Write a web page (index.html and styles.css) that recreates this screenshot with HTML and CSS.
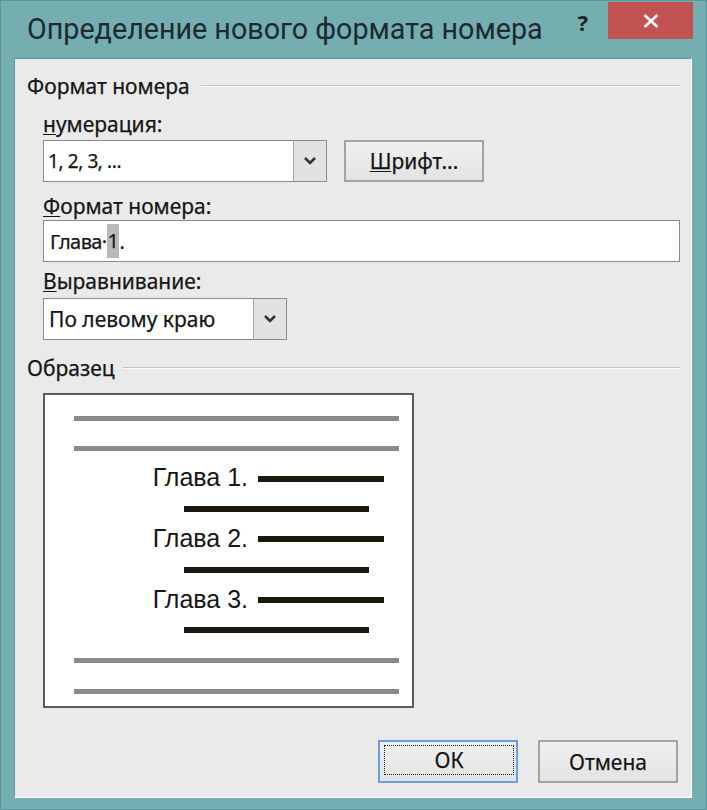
FILE: index.html
```html
<!DOCTYPE html>
<html lang="ru">
<head>
<meta charset="utf-8">
<title>Определение нового формата номера</title>
<link rel="stylesheet" href="styles.css">
</head>
<body>
<div class="window">
  <div class="titlebar">
    <div class="title">Определение нового формата номера</div>
    <div class="help">?</div>
    <div class="close">
      <svg width="16" height="14" viewBox="0 0 16 14"><path d="M1.5 1 L14.5 13 M14.5 1 L1.5 13" stroke="#fff" stroke-width="2.6" fill="none"/></svg>
    </div>
  </div>
  <div class="client">
    <div class="group-head"><span>Формат номера</span><i class="rule"></i></div>
    <div class="group-body">
      <div class="label l1"><u>н</u>умерация:</div>
      <div class="row">
        <div class="combo combo-num">
          <span class="val">1, 2, 3, ...</span>
          <span class="drop"><svg width="12" height="8" viewBox="0 0 12 8"><polyline points="1,1 6,6 11,1" fill="none" stroke="#333" stroke-width="2.6"/></svg></span>
        </div>
        <div class="btn btn-font"><u>Ш</u>рифт...</div>
      </div>
      <div class="label l2"><u>Ф</u>ормат номера:</div>
      <div class="input">Глава·<span class="sel">1</span>.</div>
      <div class="label l3"><u>В</u>ыравнивание:</div>
      <div class="combo combo-align">
        <span class="val">По левому краю</span>
        <span class="drop"><svg width="12" height="8" viewBox="0 0 12 8"><polyline points="1,1 6,6 11,1" fill="none" stroke="#333" stroke-width="2.6"/></svg></span>
      </div>
    </div>
    <div class="group-head g2"><span>Образец</span><i class="rule"></i></div>
    <div class="preview">
      <div class="prow"><i class="gbar"></i></div>
      <div class="prow"><i class="gbar"></i></div>
      <div class="prow"><span class="num">Глава 1.</span><i class="bbar first"></i></div>
      <div class="prow"><i class="bbar cont"></i></div>
      <div class="prow"><span class="num">Глава 2.</span><i class="bbar first"></i></div>
      <div class="prow"><i class="bbar cont"></i></div>
      <div class="prow"><span class="num">Глава 3.</span><i class="bbar first"></i></div>
      <div class="prow"><i class="bbar cont"></i></div>
      <div class="prow"><i class="gbar"></i></div>
      <div class="prow"><i class="gbar"></i></div>
    </div>
    <div class="actions">
      <div class="btn btn-ok"><span class="focus">ОК</span></div>
      <div class="btn btn-cancel">Отмена</div>
    </div>
  </div>
</div>
</body>
</html>
```
FILE: styles.css
```css
* { box-sizing: border-box; }
html, body { margin: 0; padding: 0; }
body { background: #72adb0; }

.window {
  width: 707px;
  height: 810px;
  background: #74aeb1;
  border: 1px solid #5c979b;
  font-family: "Segoe UI", "Noto Sans", sans-serif;
  color: #141414;
  overflow: hidden;
}

.titlebar {
  height: 57px;
  display: flex;
  align-items: flex-start;
}
.title {
  flex: 1;
  margin: 11px 0 0 26px;
  font-family: "Segoe UI", Roboto, sans-serif;
  font-size: 28.7px;
  line-height: 34px;
  color: #1d2a2f;
  white-space: nowrap;
}
.help {
  margin: 9px 20px 0 0;
  font-family: "Noto Sans", sans-serif;
  font-weight: bold;
  font-size: 22px;
  line-height: 24px;
  color: #222;
}
.close {
  width: 85px;
  height: 37px;
  margin: 1px 13px 0 0;
  background: #c25251;
  display: flex;
  align-items: center;
  justify-content: center;
}

.client {
  margin-left: 13px;
  width: 678px;
  height: 740px;
  background: #eaeaea;
  border-top: 1px solid #5f9a9e;
  border-left: 1px solid #5f9a9e;
  border-right: 1px solid #fbfbfb;
  border-bottom: 1px solid #fbfbfb;
  padding: 0 11px 0 12px;
  font-size: 21px;
  color: #151515;
  -webkit-text-stroke: 0.25px #151515;
}

.group-head {
  margin-top: 15px;
  height: 24px;
  line-height: 22px;
  display: flex;
  align-items: center;
  white-space: nowrap;
}
.group-head.g2 { margin-top: 16px; }
.rule {
  flex: 1;
  margin-left: 11px;
  height: 2px;
  border-top: 1px solid #c6c6c6;
  border-bottom: 1px solid #fafafa;
  margin-top: -1px;
}
.g2 .rule { margin-left: 8px; }

.group-body { padding-left: 16px; }

.label {
  height: 24px;
  line-height: 22px;
  white-space: nowrap;
}
.l1 { margin-top: 15px; }
.l2 { margin-top: 13px; }
.l3 { margin-top: 8px; }
u { text-decoration-thickness: 1px; text-underline-offset: 2px; }

.row {
  display: flex;
  gap: 17px;
  margin-top: 3px;
}

.combo {
  height: 42px;
  display: flex;
  background: #fff;
  border: 1px solid #8a8a8a;
}
.combo-num { width: 284px; }
.combo-num .val { font-size: 19px; letter-spacing: -0.4px; }
.combo-align { width: 244px; margin-top: 4px; }
.combo .val {
  flex: 1;
  padding-left: 4px;
  display: flex;
  align-items: center;
  white-space: nowrap;
}
.combo-align .val { padding-left: 5px; }
.drop {
  width: 33px;
  background: #e2e2e2;
  border-left: 1px solid #a9a9a9;
  display: flex;
  align-items: center;
  justify-content: center;
}

.btn {
  width: 140px;
  height: 42px;
  border: 2px solid #a3a3a3;
  background: linear-gradient(#f0f0f0, #e3e3e3);
  display: flex;
  align-items: center;
  justify-content: center;
  white-space: nowrap;
}

.input {
  margin-top: 1px;
  height: 42px;
  width: 637px;
  background: #fff;
  border: 1px solid #8a8a8a;
  padding-left: 6px;
  display: flex;
  align-items: center;
  white-space: pre;
  font-size: 20px;
  letter-spacing: -0.6px;
}
.sel {
  background: #b9b9b9;
  padding: 3px 1px 4px;
}

.preview {
  margin: 13px 0 0 16px;
  width: 371px;
  height: 315px;
  background: #fff;
  border: 2px solid #5c5c5c;
  padding-top: 8px;
  display: grid;
  grid-template-rows: repeat(10, 30.33px);
  align-content: start;
  overflow: hidden;
  -webkit-text-stroke: 0;
}
.prow {
  display: flex;
  align-items: center;
}
.gbar {
  display: block;
  margin-left: 29px;
  width: 325px;
  height: 5px;
  background: #8b8b8b;
}
.num {
  width: 203px;
  text-align: right;
  font-family: "Liberation Sans", Arial, sans-serif;
  font-size: 25px;
  line-height: 28px;
  padding-bottom: 3px;
  color: #161616;
  white-space: nowrap;
}
.bbar {
  display: block;
  height: 6px;
  background: #1c1810;
}
.bbar.first { margin-left: 10px; width: 126px; }
.bbar.cont { margin-left: 139px; width: 185px; }

.actions {
  margin: 32px 2px 0 0;
  display: flex;
  justify-content: flex-end;
  gap: 20px;
}
.actions .btn { height: 43px; }
.btn-ok {
  border-color: #6b9de0;
  padding: 3px 2px 6px 4px;
}
.focus {
  flex: 1;
  align-self: stretch;
  border: 1px dotted #222;
  display: flex;
  align-items: center;
  justify-content: center;
}
```
